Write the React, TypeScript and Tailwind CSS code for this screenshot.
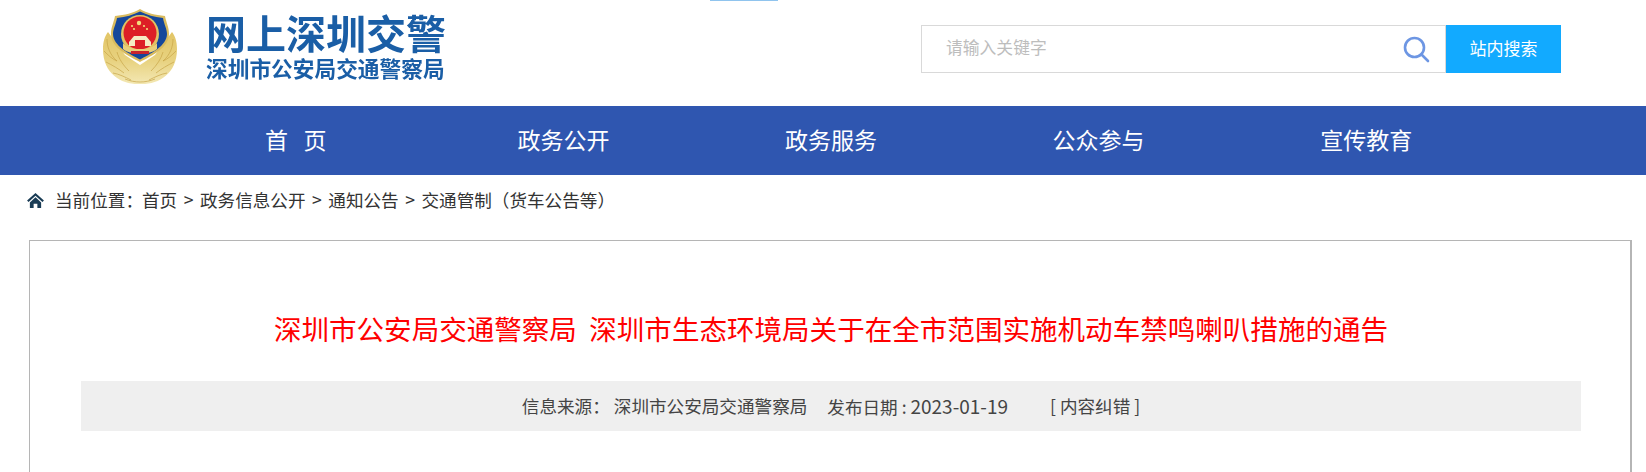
import React from 'react';

const navItems = ['首   页', '政务公开', '政务服务', '公众参与', '宣传教育'];
const crumbs = ['首页', '政务信息公开', '通知公告', '交通管制（货车公告等）'];

// leaf veins of the wreath, left side; the right side is mirrored
const veins = [
  'M12 34C12 42 15 50 22 56',
  'M9 46C13 50 17 54 22 56',
  'M11 57C17 60 24 64 29 68',
  'M18 68C24 69 30 72 36 75',
  'M22 47C24 54 28 60 34 66',
  'M30 74C35 76 40 77 45 77',
];

const PoliceBadge: React.FC = () => (
  <svg viewBox="0 0 90 85" className="w-[90px] h-[85px] blur-[0.6px]">
    <defs>
      <linearGradient id="gold" x1="0" y1="0" x2="0" y2="1">
        <stop offset="0" stopColor="#e2c566" />
        <stop offset="0.55" stopColor="#e8d280" />
        <stop offset="1" stopColor="#f3e8b4" />
      </linearGradient>
    </defs>
    {/* wreath */}
    <path d="M45 79C28 80 8 70 8 44C8 36 10 31 13 27L30 50L45 60L60 50L77 27C80 31 82 36 82 44C82 70 62 80 45 79Z" fill="url(#gold)" />
    {veins.map((d) => (
      <g key={d} fill="none" stroke="#c7a548" strokeWidth="0.7">
        <path d={d} />
        <path d={d} transform="matrix(-1 0 0 1 90 0)" />
      </g>
    ))}
    {/* shield */}
    <path d="M45 4C38 8 30 10 20 11C19 17 16 22 16 29C16 43 34 51 45 57C56 51 74 43 74 29C74 22 71 17 70 11C60 10 52 8 45 4Z" fill="#d9bb5e" />
    <path d="M45 6.5C38 10 31 12 22 13C21 19 18 24 18 29C18 41 35 49 45 54.5C55 49 72 41 72 29C72 24 69 19 68 13C59 12 52 10 45 6.5Z" fill="#15479b" />
    <circle cx="45" cy="29" r="19" fill="#e2c262" />
    <circle cx="45" cy="28" r="16.5" fill="#dd1f26" />
    {/* stars */}
    <circle cx="44" cy="18" r="2.2" fill="#f3dc7c" />
    <circle cx="37" cy="21" r="1.1" fill="#f3dc7c" />
    <circle cx="39" cy="24" r="1.1" fill="#f3dc7c" />
    <circle cx="49" cy="21" r="1.1" fill="#f3dc7c" />
    <circle cx="52" cy="24" r="1.1" fill="#f3dc7c" />
    {/* gate */}
    <path d="M34 37L39 31H51L56 37V41H34Z" fill="#f6ecc4" />
    <rect x="40" y="35" width="10" height="6" fill="#dd1f26" />
    <path d="M28 38C33 46 57 46 62 38L62 44C56 50 34 50 28 44Z" fill="#e9d07a" />
    <rect x="36" y="46" width="18" height="3" fill="#c9252b" />
  </svg>
);

const App: React.FC = () => {
  return (
    <div className="relative h-[472px] overflow-hidden bg-white text-[#333] font-['Noto_Sans_CJK_SC','Noto_Sans',sans-serif]">
      <div className="absolute top-0 left-[710px] w-[68px] h-px bg-[#90c4ee]" />

      {/* header */}
      <header className="flex items-start h-[106px]">
        <div className="flex ml-[95px] mt-[5px]">
          <PoliceBadge />
          <div className="ml-[21px] mt-[5px] flex flex-col text-[#1a5ea6] font-bold blur-[0.4px]">
            <span className="text-[40px] leading-[44px] whitespace-nowrap">网上深圳交警</span>
            <span className="text-[21.7px] leading-[24px] mt-[2px] whitespace-nowrap">深圳市公安局交通警察局</span>
          </div>
        </div>
        <div className="ml-auto mr-[85px] mt-[25px] flex h-[48px]">
          <div className="flex items-center w-[525px] border border-[#d9d9d9] pl-[24px] pr-[15px] pb-[2px]">
            <span className="flex-1 text-[16.8px] text-[#bdbdbd]">请输入关键字</span>
            <svg viewBox="0 0 28 28" className="w-[28px] h-[28px] mt-[2px]" fill="none" stroke="#6d96e3" strokeLinecap="round">
              <circle cx="12.5" cy="12.5" r="9.5" strokeWidth="2.6" />
              <path d="M19.5 19.5L26 26" strokeWidth="2.6" />
            </svg>
          </div>
          <button className="w-[115px] bg-[#12aaff] text-white text-[17px] pb-[2px]">站内搜索</button>
        </div>
      </header>

      {/* nav */}
      <nav className="flex h-[69px] bg-[#2f56b0] pl-[162px] pb-[2px]">
        {navItems.map((item) => (
          <a key={item} className="w-[267.6px] flex items-center justify-center text-white text-[23px] whitespace-pre">
            {item}
          </a>
        ))}
      </nav>

      {/* breadcrumb */}
      <div className="flex items-center h-[65px] pl-[27px] pb-[14px] text-[17.6px] text-[#333]">
        <svg viewBox="0 0 18 16" className="w-[17px] h-[15px] mr-[11px]" fill="#1a3c55">
          <path d="M9 0L18 8L16.4 9.6L9 3L1.6 9.6L0 8Z" />
          <path d="M9 4.6L15 10V16H11V11.5H7V16H3V10Z" />
        </svg>
        <span>当前位置：</span>
        <span className="-ml-[1px]">
          {crumbs.map((c, i) => (
            <React.Fragment key={c}>
              {i > 0 && <span className="mx-[6.5px]">&gt;</span>}
              {c}
            </React.Fragment>
          ))}
        </span>
      </div>

      {/* article */}
      <main className="ml-[29px] w-[1603px] h-[400px] border border-[#b5b5b5] border-r-2 px-[51px]">
        <h1 className="mt-[67px] pl-[2px] text-center text-[27.55px] leading-[40px] font-normal text-[#ff0000] whitespace-pre">
          深圳市公安局交通警察局  深圳市生态环境局关于在全市范围实施机动车禁鸣喇叭措施的通告
        </h1>
        <div className="mt-[33px] h-[50px] w-[1500px] flex items-center justify-center bg-[#efefef] text-[17.6px] text-[#444] whitespace-pre">
          <span>信息来源：</span>
          <span className="ml-[4px]">深圳市公安局交通警察局</span>
          <span className="ml-[20px]">发布日期 : <span className="text-[19px]">2023-01-19</span></span>
          <span className="ml-[42px]">[ 内容纠错 ]</span>
        </div>
      </main>
    </div>
  );
};

export default App;
